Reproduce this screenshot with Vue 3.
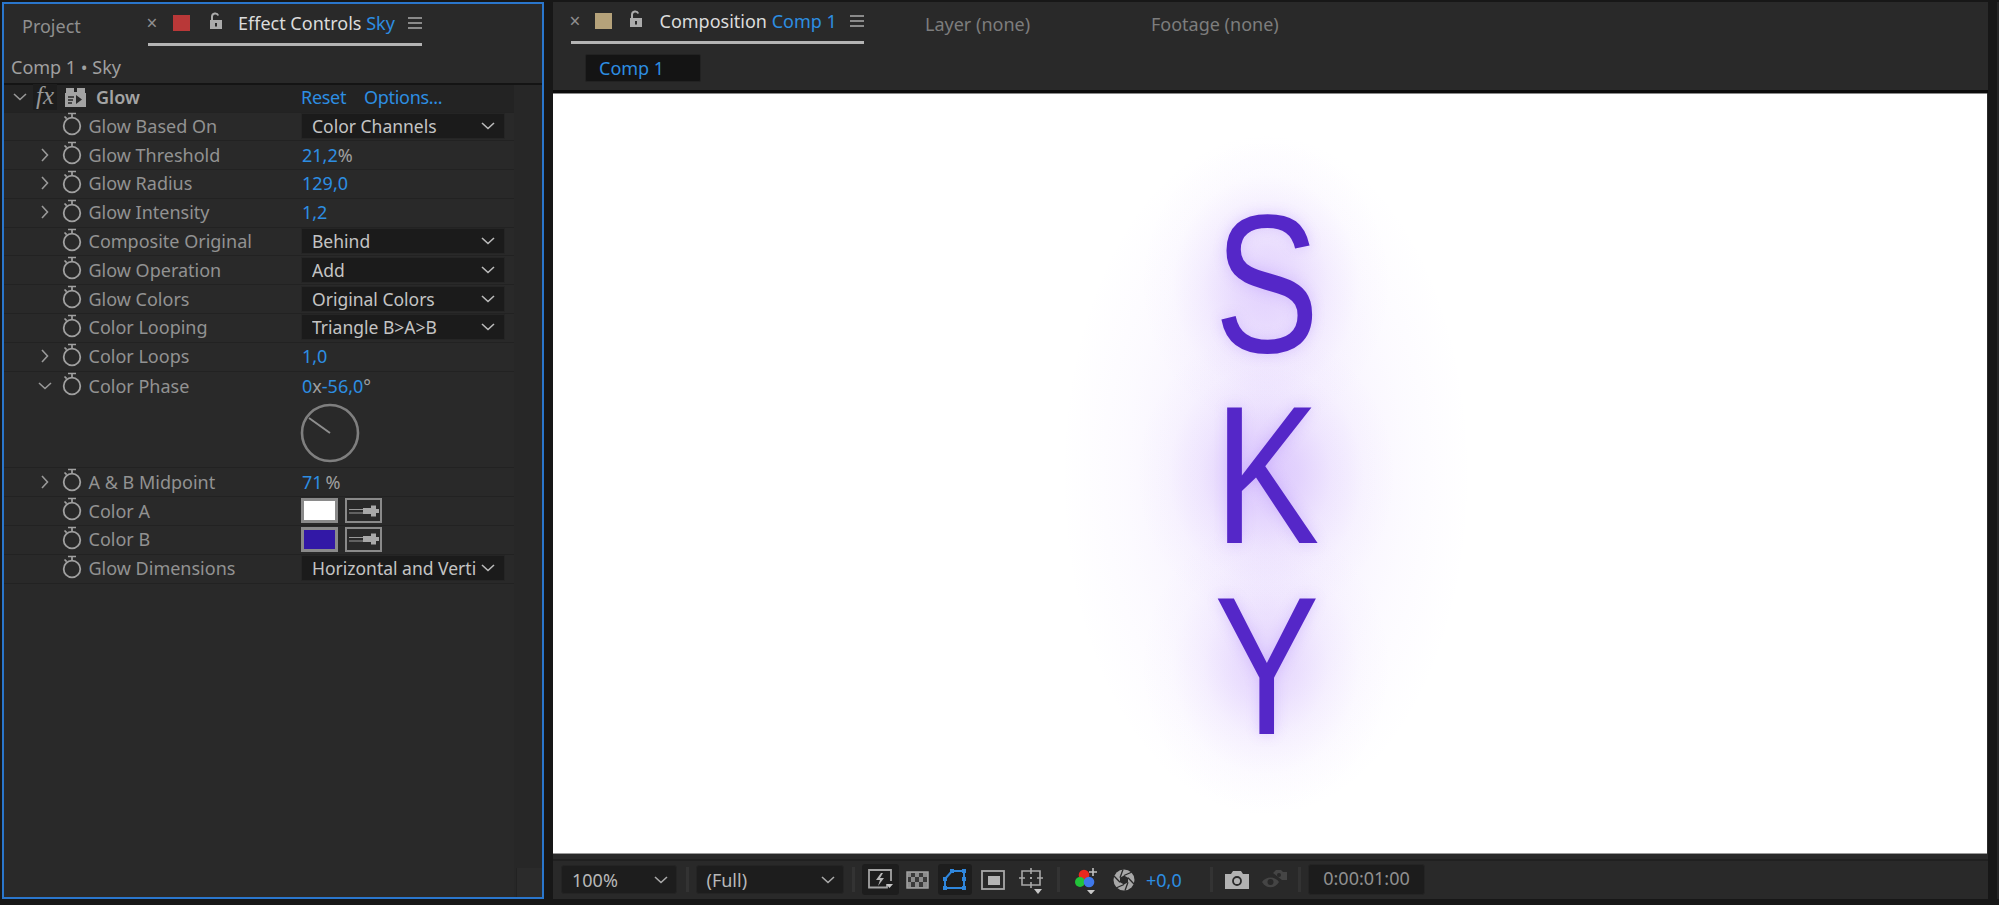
<script setup>
const rows = [
  { label: 'Glow Based On', select: 'Color Channels' },
  { label: 'Glow Threshold', twirl: 'closed', value: [['21,2', 1], ['%', 0]] },
  { label: 'Glow Radius', twirl: 'closed', value: [['129,0', 1]] },
  { label: 'Glow Intensity', twirl: 'closed', value: [['1,2', 1]] },
  { label: 'Composite Original', select: 'Behind' },
  { label: 'Glow Operation', select: 'Add' },
  { label: 'Glow Colors', select: 'Original Colors' },
  { label: 'Color Looping', select: 'Triangle B>A>B' },
  { label: 'Color Loops', twirl: 'closed', value: [['1,0', 1]] },
  { label: 'Color Phase', twirl: 'open', value: [['0', 1], ['x', 0], ['-56,0', 1], ['°', 0]], dial: true },
  { label: 'A & B Midpoint', twirl: 'closed', value: [['71', 1], ['\u2009%', 0]] },
  { label: 'Color A', color: '#ffffff' },
  { label: 'Color B', color: '#3218a6' },
  { label: 'Glow Dimensions', select: 'Horizontal and Verti' }
]
const letters = ['S', 'K', 'Y']
</script>

<template>
  <div class="screen">
    <section class="effect-panel">
      <header class="tabs">
        <span class="tab-project">Project</span>
        <div class="tab-active left-active">
          <span class="close">×</span>
          <span class="swatch red"></span>
          <svg class="lock" viewBox="0 0 14 18" width="14" height="18">
            <path d="M3 8V4.5a3.2 3.2 0 0 1 6.2-1" fill="none" stroke="#ababab" stroke-width="2" />
            <rect x="1" y="8" width="12" height="9" fill="#ababab" />
            <rect x="6" y="11" width="2" height="3.5" fill="#292929" />
          </svg>
          <span class="tab-title">Effect Controls <em>Sky</em></span>
          <svg class="menu" viewBox="0 0 14 12" width="14" height="12">
            <path d="M0 1h14M0 6h14M0 11h14" stroke="#aaa" stroke-width="1.5" />
          </svg>
        </div>
      </header>
      <div class="breadcrumb">Comp 1 • Sky</div>
      <div class="effect-body">
        <div class="rows">
          <div class="effect-head">
            <svg class="head-chev" viewBox="0 0 14 8" width="14" height="8"><path d="M1 1l6 5.5L13 1" fill="none" stroke="#999" stroke-width="1.6" /></svg>
            <span class="fx">fx</span>
            <svg class="preset" viewBox="0 0 21 20" width="21" height="20">
              <path d="M0 6h1V1h8v4h3V1h8v5h1v14H0z" fill="#a3a3a3" />
              <path d="M3 10h6M3 13h5M3 16h4" stroke="#292929" stroke-width="1.4" />
              <path d="M11 8l6 4.5-6 4.5z" fill="#292929" />
            </svg>
            <span class="glow-name">Glow</span>
            <a class="link reset">Reset</a>
            <a class="link">Options...</a>
          </div>
          <template v-for="row in rows" :key="row.label">
            <div class="row" :class="{ expanded: row.dial }">
              <span class="twirl">
                <svg v-if="row.twirl === 'closed'" viewBox="0 0 8 14" width="8" height="14"><path d="M1 1l5.5 6L1 13" fill="none" stroke="#999" stroke-width="1.6" /></svg>
                <svg v-else-if="row.twirl === 'open'" class="open" viewBox="0 0 14 8" width="14" height="8"><path d="M1 1l6 5.5L13 1" fill="none" stroke="#999" stroke-width="1.6" /></svg>
              </span>
              <svg class="watch" viewBox="0 0 20 24" width="20" height="24">
                <circle cx="10" cy="14" r="8.3" fill="none" stroke="#a0a0a0" stroke-width="1.8" />
                <path d="M6 1.5h8M10 1.5v4M2.5 4.5l2.2 2.2" fill="none" stroke="#a0a0a0" stroke-width="1.7" />
              </svg>
              <span class="label">{{ row.label }}</span>
              <div v-if="row.select" class="select">
                <span class="select-text">{{ row.select }}</span>
                <svg viewBox="0 0 14 8" width="14" height="8"><path d="M1 1l6 5.5L13 1" fill="none" stroke="#bbb" stroke-width="1.6" /></svg>
              </div>
              <span v-else-if="row.value" class="value">
                <span v-for="(part, i) in row.value" :key="i" :class="part[1] ? 'blue' : 'unit'">{{ part[0] }}</span>
              </span>
              <div v-else-if="row.color" class="colors">
                <span class="color-chip" :style="{ background: row.color }"></span>
                <span class="dropper">
                  <svg viewBox="0 0 32 16" width="32" height="16">
                    <path d="M1 6.500h16v3.500H1" fill="none" stroke="#9a9a9a" stroke-width="1.200" />
                    <path d="M15 5h8V2.500h5V6h3v4h-3v3.500h-5V11h-8z" fill="#a8a8a8" />
                  </svg>
                </span>
              </div>
            </div>
            <div v-if="row.dial" class="dial-row">
              <svg viewBox="0 0 60 60" width="60" height="60">
                <circle cx="30" cy="30" r="28" fill="none" stroke="#7f7f7f" stroke-width="2.600" />
                <path d="M30 30L9 15" stroke="#8e8e8e" stroke-width="2" />
              </svg>
            </div>
          </template>
        </div>
        <aside class="scrollbar"><span class="scroll-end"></span></aside>
      </div>
    </section>

    <section class="comp-panel">
      <div class="comp-top">
        <header class="comp-tabs">
          <div class="tab-active comp-active">
            <span class="close">×</span>
            <span class="swatch tan"></span>
            <svg class="lock" viewBox="0 0 14 18" width="14" height="18">
              <path d="M3 8V4.5a3.2 3.2 0 0 1 6.2-1" fill="none" stroke="#ababab" stroke-width="2" />
              <rect x="1" y="8" width="12" height="9" fill="#ababab" />
              <rect x="6" y="11" width="2" height="3.5" fill="#292929" />
            </svg>
            <span class="tab-title">Composition <em>Comp 1</em></span>
            <svg class="menu" viewBox="0 0 14 12" width="14" height="12">
              <path d="M0 1h14M0 6h14M0 11h14" stroke="#aaa" stroke-width="1.5" />
            </svg>
          </div>
          <span class="dim-tab layer">Layer (none)</span>
          <span class="dim-tab">Footage (none)</span>
        </header>
        <div class="comp-crumb"><span>Comp 1</span></div>
      </div>
      <div class="viewer">
        <div class="glow-cloud"></div>
        <div class="sky">
          <span v-for="l in letters" :key="l">{{ l }}</span>
        </div>
      </div>
      <div class="viewer-gap"></div>
      <footer class="toolbar">
        <div class="tb-select zoom-sel"><span>100%</span><svg viewBox="0 0 14 8" width="14" height="8"><path d="M1 1l6 5.500L13 1" fill="none" stroke="#aaa" stroke-width="1.600" /></svg></div>
        <i class="divider d1"></i>
        <div class="tb-select res-sel"><span>(Full)</span><svg viewBox="0 0 14 8" width="14" height="8"><path d="M1 1l6 5.500L13 1" fill="none" stroke="#aaa" stroke-width="1.600" /></svg></div>
        <i class="divider d2"></i>
        <span class="icon-box first">
          <svg viewBox="0 0 25 22" width="25" height="22">
            <path d="M19 15.500v3H1V1h22v11" fill="none" stroke="#a3a3a3" stroke-width="1.800" />
            <path d="M13 4l-5 7h4l-2 6 6-8h-4l3-5z" fill="#b8b8b8" />
            <path d="M18 15h7l-3.500 4z" fill="#c8c8c8" />
          </svg>
        </span>
        <svg class="checker" viewBox="0 0 23 18" width="23" height="18">
          <rect x="1" y="1" width="21" height="16" fill="#8c8c8c" stroke="#a0a0a0" stroke-width="1.500" />
          <path d="M5 2h4v4H5zM13 2h4v4h-4zM9 6h4v5H9zM17 6h4v5h-4zM2 6h3v5H2zM5 11h4v5H5zM13 11h4v5h-4z" fill="#3a3a3a" />
        </svg>
        <span class="icon-box mask">
          <svg viewBox="0 0 26 22" width="26" height="22">
            <path d="M3 10L10 2h12v17H3z" fill="none" stroke="#2f86dc" stroke-width="2" />
            <path d="M1 8h4v4H1zM8 0h4v4H8zM20 0h4v4h-4zM20 8h4v4h-4zM20 17h4v4h-4zM1 17h4v4H1z" fill="#2f86dc" />
          </svg>
        </span>
        <svg class="title-safe" viewBox="0 0 24 20" width="24" height="20">
          <rect x="1" y="1" width="22" height="18" fill="none" stroke="#a8a8a8" stroke-width="1.800" />
          <rect x="7" y="6" width="12" height="9" fill="#b5b5b5" />
        </svg>
        <svg class="grid-ico" viewBox="0 0 24 26" width="24" height="26">
          <path d="M3 3h18v14H3zM0 10h6M18 10h6M12 0v6M12 14v6" fill="none" stroke="#a8a8a8" stroke-width="1.600" />
          <rect x="11" y="9" width="2" height="2" fill="#a8a8a8" />
          <path d="M15 21h8l-4 5z" fill="#c8c8c8" />
        </svg>
        <i class="divider d3"></i>
        <svg class="channels" viewBox="0 0 24 26" width="24" height="26">
          <circle cx="10" cy="7" r="5.300" fill="#e8281e" />
          <circle cx="6" cy="14" r="5" fill="#22c33a" />
          <circle cx="15" cy="14" r="5.300" fill="#3f78ea" />
          <path d="M19 0v8M15 4h8" stroke="#c0c0c0" stroke-width="1.600" />
          <path d="M13 22h8l-4 4.500z" fill="#c8c8c8" />
        </svg>
        <svg class="aperture" viewBox="0 0 22 22" width="22" height="22">
          <circle cx="11" cy="11" r="10.500" fill="#a8a8a8" />
          <path d="M11 6.500L15 8.800V13.200L11 15.500L7 13.200V8.800Z" fill="#292929" />
          <path d="M11 6.500L19 3M15 8.800L21 15M15 13.200L12 21.500M11 15.500L3 19M7 13.200L1 7M7 8.800L10 .5" stroke="#292929" stroke-width="1.300" />
        </svg>
        <span class="exposure">+0,0</span>
        <i class="divider d4"></i>
        <svg class="camera" viewBox="0 0 24 18" width="24" height="18">
          <path d="M0 3h6l2-3h8l2 3h6v15H0z" fill="#b2b2b2" />
          <circle cx="12" cy="10" r="4" fill="none" stroke="#292929" stroke-width="1.800" />
        </svg>
        <svg class="eye" viewBox="0 0 25 21" width="25" height="21">
          <path d="M0 13c4-6 13-6 17 0-4 7-13 7-17 0z" fill="#454545" />
          <circle cx="8.500" cy="13" r="3" fill="#292929" />
          <path d="M11 4l3-3h5l2 2h4v8h-5" fill="#454545" />
          <circle cx="17" cy="6" r="2" fill="#292929" />
        </svg>
        <i class="divider d5"></i>
        <span class="timecode">0:00:01:00</span>
      </footer>
    </section>
    <div class="edge-strip"></div>
  </div>
</template>

<style>
html, body { margin: 0; background: #171717; }
</style>

<style scoped>
.screen {
  width: 1999px;
  height: 905px;
  box-sizing: border-box;
  padding: 2px 0 6px 2px;
  display: flex;
  background: #171717;
  font-family: "Noto Sans", sans-serif;
  font-size: 18px;
  color: #929292;
  overflow: hidden;
}
em { font-style: normal; color: #2d8ee2; }

/* left panel */
.effect-panel {
  width: 542px;
  box-sizing: border-box;
  border: 2px solid #2a76cc;
  background: #292929;
  display: flex;
  flex-direction: column;
  flex: none;
}
.tabs { height: 42px; display: flex; position: relative; flex: none; }
.tab-project { margin: 12px 0 0 18px; width: 125.5px; color: #8f8f8f; line-height: 20px; }
.tab-active {
  display: flex;
  align-items: center;
  height: 41.5px;
  box-sizing: border-box;
  border-bottom: 3px solid #b4b4b4;
  color: #dcdcdc;
}
.left-active { width: 274px; }
.close { font-size: 19px; color: #8f8f8f; width: 25.5px; line-height: 20px; margin-left: -1px; }
.swatch { width: 17px; height: 16px; flex: none; margin-left: 1px; }
.red { background: #b93838; }
.tan { background: #b5a27a; margin-left: -4px; }
.lock { margin: -4px 15px 0 19px; flex: none; }
.tab-title { white-space: nowrap; }
.menu { margin-left: auto; flex: none; }
.breadcrumb {
  height: 36.5px;
  padding-left: 7px;
  line-height: 43px;
  box-sizing: border-box;
  color: #a0a0a0;
  flex: none;
}
.effect-body {
  flex: 1;
  display: flex;
  border-top: 2px solid #141414;
  min-height: 0;
}
.rows { width: 510px; flex: none; }
.effect-head {
  height: 28px;
  background: #232323;
  display: flex;
  align-items: center;
  box-sizing: border-box;
  border-bottom: 1px solid #222;
  padding-bottom: 2px;
}
.head-chev { margin-left: 9px; flex: none; }
.fx {
  font: italic 25px "Liberation Serif", serif;
  color: #989898;
  margin-left: 6px;
  width: 24px;
  height: 26px;
  line-height: 24px;
  background: #1d1d1d;
  text-align: center;
}
.preset { margin-left: 8px; flex: none; }
.glow-name { margin-left: 10px; width: 205px; font-weight: 600; color: #a4a4a4; }
.link { color: #2d8ee2; letter-spacing: -.3px; }
.reset { width: 63px; }

.row {
  height: 28.8px;
  box-sizing: border-box;
  border-bottom: 1px solid #222;
  padding-bottom: 1px;
  display: grid;
  grid-template-columns: 48px 36.500px 212.500px 1fr;
  align-items: center;
}
.row.expanded { border-bottom: 0; }
.twirl { display: flex; justify-content: flex-start; padding-left: 37px; align-items: center; }
.twirl .open { margin-left: -3px; }
.watch { margin-left: 10px; margin-top: -3px; }
.label { white-space: nowrap; color: #929292; }
.select {
  width: 204px;
  height: 26px;
  box-sizing: border-box;
  background: #1b1b1b;
  border: 1px solid #252525;
  color: #c4c4c4;
  padding: 0 9px 0 10px;
  display: flex;
  align-items: center;
  justify-content: space-between;
  overflow: hidden;
  white-space: nowrap;
  font-size: 17.500px;
}
.select svg { flex: none; }
.select-text { overflow: hidden; }
.value { white-space: pre; padding-left: 1px; }
.blue { color: #2d8ee2; }
.unit { color: #a0a0a0; }
.colors { display: flex; gap: 7px; }
.color-chip {
  width: 37px;
  height: 25px;
  box-sizing: border-box;
  border: 3px solid #8a8a8a;
}
.dropper {
  width: 37px;
  height: 25px;
  box-sizing: border-box;
  border: 2px solid #8a8a8a;
  display: flex;
  align-items: center;
  justify-content: center;
}
.dial-row {
  height: 68px;
  box-sizing: border-box;
  border-bottom: 1px solid #222;
  padding: 3px 0 0 296px;
}
.dial-row svg { display: block; }
.scrollbar {
  flex: 1;
  background: #272727;
  display: flex;
  flex-direction: column;
  justify-content: flex-end;
  padding-left: 2px;
}
.scroll-end { height: 29px; background: #2b2b2b; border-left: 1px solid #222; }

/* right panel */
.comp-panel {
  margin-left: 9px;
  width: 1435px;
  flex: none;
  display: flex;
  flex-direction: column;
  background: #292929;
}
.comp-top { height: 88px; flex: none; border-bottom: 3px solid #0c0c0c; }
.comp-tabs { display: flex; height: 43.500px; padding-left: 17.500px; }
.comp-active { width: 293.500px; }
.comp-active .close { width: 29px; }
.comp-active .lock { margin: -4px 17px 0 17px; }
.dim-tab { color: #7d7d7d; margin-top: 12px; line-height: 20px; white-space: nowrap; }
.layer { margin-left: 61px; width: 226px; }
.comp-crumb { padding: 8.500px 0 0 32px; }
.comp-crumb span {
  display: block;
  width: 116px;
  height: 28px;
  box-sizing: border-box;
  padding-left: 13px;
  line-height: 26px;
  background: #141414;
  border: 1px solid #222;
  border-radius: 2px;
  color: #2d8ee2;
}
.viewer {
  height: 761px;
  width: 1434px;
  flex: none;
  box-sizing: border-box;
  border-top: 1px solid #8a8a8a;
  border-bottom: 1px solid #9a9a9a;
  background: #fff;
  display: flex;
  align-items: center;
  justify-content: center;
  overflow: hidden;
  position: relative;
}
.glow-cloud {
  position: absolute;
  inset: 0;
  background:
    radial-gradient(ellipse 125px 145px at 713px 190px, rgba(160, 105, 250, .27), rgba(160, 105, 250, .2) 25%, rgba(160, 105, 250, .09) 50%, rgba(160, 105, 250, .02) 75%, rgba(160, 105, 250, 0) 100%),
    radial-gradient(ellipse 130px 145px at 713px 381px, rgba(160, 105, 250, .31), rgba(160, 105, 250, .23) 25%, rgba(160, 105, 250, .1) 50%, rgba(160, 105, 250, .025) 75%, rgba(160, 105, 250, 0) 100%),
    radial-gradient(ellipse 125px 145px at 713px 572px, rgba(160, 105, 250, .25), rgba(160, 105, 250, .18) 25%, rgba(160, 105, 250, .08) 50%, rgba(160, 105, 250, .02) 75%, rgba(160, 105, 250, 0) 100%),
    radial-gradient(ellipse 205px 345px at 713px 381px, rgba(165, 115, 250, .1), rgba(165, 115, 250, .08) 40%, rgba(165, 115, 250, .03) 70%, rgba(165, 115, 250, 0) 100%);
}
.sky {
  position: relative;
  display: flex;
  flex-direction: column;
  align-items: center;
  font: 197px/191px "Liberation Sans", sans-serif;
  color: #5527c8;
  text-shadow: 0 0 14px rgba(150, 100, 250, .25);
  transform: translate(-3px, 2px) scaleX(.8);
}
.viewer-gap { height: 5px; border-bottom: 2px solid #202020; flex: none; }
.toolbar { height: 37px; flex: none; display: flex; align-items: center; position: relative; }
.tb-select {
  height: 29px;
  box-sizing: border-box;
  background: #1d1d1d;
  border: 1px solid #242424;
  border-radius: 3px;
  color: #b8b8b8;
  display: flex;
  align-items: center;
  justify-content: space-between;
  padding: 0 8px 0 10px;
  flex: none;
}
.zoom-sel { width: 116px; margin-left: 8px; }
.res-sel { width: 148px; margin-left: 7px; }
.divider { width: 3px; height: 25px; background: #333; flex: none; }
.d1 { margin-left: 8.500px; }
.d2 { margin-left: 8.500px; }
.d3 { margin-left: 14px; }
.d4 { margin-left: 27px; }
.d5 { margin-left: 11px; }
.icon-box {
  width: 37px;
  height: 31px;
  background: #1d1d1d;
  border-radius: 3px;
  display: flex;
  align-items: center;
  justify-content: center;
  flex: none;
}
.first { margin-left: 7px; }
.checker { margin-left: 7px; flex: none; }
.mask { width: 34px; margin-left: 9px; }
.title-safe { margin-left: 9px; flex: none; }
.grid-ico { margin: 2px 0 0 14px; flex: none; }
.channels { margin: 2px 0 0 14px; flex: none; }
.aperture { margin-left: 15px; flex: none; }
.exposure { color: #2d8ee2; margin-left: 11px; width: 37px; }
.camera { margin-left: 12px; flex: none; }
.eye { margin-left: 13px; flex: none; }
.timecode {
  margin-left: 7px;
  width: 117px;
  height: 31px;
  box-sizing: border-box;
  background: #1c1c1c;
  border: 1px solid #242424;
  border-radius: 3px;
  color: #909090;
  text-align: center;
  line-height: 27px;
  flex: none;
}
.edge-strip { margin-left: 9px; width: 2px; background: #262626; flex: none; }
</style>
